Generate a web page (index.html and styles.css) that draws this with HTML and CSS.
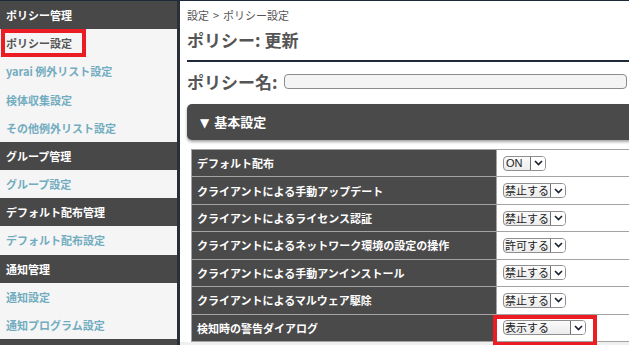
FILE: index.html
```html
<!DOCTYPE html>
<html lang="ja">
<head>
<meta charset="utf-8">
<title>ポリシー: 更新</title>
<link rel="stylesheet" href="styles.css">
</head>
<body>
<div class="app">
  <aside class="side">
    <div class="side-h">ポリシー管理</div>
    <a class="side-i current">ポリシー設定<span class="mark"></span></a>
    <a class="side-i">yarai 例外リスト設定</a>
    <a class="side-i">検体収集設定</a>
    <a class="side-i">その他例外リスト設定</a>
    <div class="side-h">グループ管理</div>
    <a class="side-i">グループ設定</a>
    <div class="side-h">デフォルト配布管理</div>
    <a class="side-i">デフォルト配布設定</a>
    <div class="side-h">通知管理</div>
    <a class="side-i">通知設定</a>
    <a class="side-i">通知プログラム設定</a>
    <div class="side-h"></div>
  </aside>
  <main class="main">
    <div class="content">
      <div class="crumb">設定<span class="gt">&gt;</span>ポリシー設定</div>
      <h1 class="title">ポリシー: 更新</h1>
      <div class="name-row">
        <span class="name-label">ポリシー名:</span>
        <span class="name-input"></span>
      </div>
      <section class="panel">
        <div class="panel-h"><span class="tri">▼</span>基本設定</div>
        <div class="grid">
          <div class="row">
            <div class="lab">デフォルト配布</div>
            <div class="val"><span class="sel sel-on"><span class="sel-v">ON</span><span class="sel-btn"><svg width="9" height="6" viewBox="0 0 9 6"><polyline points="1,1 4.5,4.5 8,1" fill="none" stroke="#1b2433" stroke-width="1.7"/></svg></span></span></div>
          </div>
          <div class="row">
            <div class="lab">クライアントによる手動アップデート</div>
            <div class="val"><span class="sel"><span class="sel-v">禁止する</span><span class="sel-btn"><svg width="9" height="6" viewBox="0 0 9 6"><polyline points="1,1 4.5,4.5 8,1" fill="none" stroke="#1b2433" stroke-width="1.7"/></svg></span></span></div>
          </div>
          <div class="row">
            <div class="lab">クライアントによるライセンス認証</div>
            <div class="val"><span class="sel"><span class="sel-v">禁止する</span><span class="sel-btn"><svg width="9" height="6" viewBox="0 0 9 6"><polyline points="1,1 4.5,4.5 8,1" fill="none" stroke="#1b2433" stroke-width="1.7"/></svg></span></span></div>
          </div>
          <div class="row">
            <div class="lab">クライアントによるネットワーク環境の設定の操作</div>
            <div class="val"><span class="sel"><span class="sel-v">許可する</span><span class="sel-btn"><svg width="9" height="6" viewBox="0 0 9 6"><polyline points="1,1 4.5,4.5 8,1" fill="none" stroke="#1b2433" stroke-width="1.7"/></svg></span></span></div>
          </div>
          <div class="row">
            <div class="lab">クライアントによる手動アンインストール</div>
            <div class="val"><span class="sel"><span class="sel-v">禁止する</span><span class="sel-btn"><svg width="9" height="6" viewBox="0 0 9 6"><polyline points="1,1 4.5,4.5 8,1" fill="none" stroke="#1b2433" stroke-width="1.7"/></svg></span></span></div>
          </div>
          <div class="row">
            <div class="lab">クライアントによるマルウェア駆除</div>
            <div class="val"><span class="sel"><span class="sel-v">禁止する</span><span class="sel-btn"><svg width="9" height="6" viewBox="0 0 9 6"><polyline points="1,1 4.5,4.5 8,1" fill="none" stroke="#1b2433" stroke-width="1.7"/></svg></span></span></div>
          </div>
          <div class="row">
            <div class="lab">検知時の警告ダイアログ</div>
            <div class="val"><span class="sel sel-wide"><span class="sel-v">表示する</span><span class="sel-btn"><svg width="9" height="6" viewBox="0 0 9 6"><polyline points="1,1 4.5,4.5 8,1" fill="none" stroke="#1b2433" stroke-width="1.7"/></svg></span></span><span class="hl"></span></div>
          </div>
        </div>
      </section>
    </div>
    <div class="foot"></div>
  </main>
</div>
</body>
</html>
```
FILE: styles.css
```css
html, body {
  margin: 0;
  padding: 0;
  background: #ffffff;
  overflow: hidden;
}
body {
  font-family: "Noto Sans CJK JP", "Noto Sans", sans-serif;
  color: #555555;
}
.app {
  display: flex;
  border-top: 1px solid #1d2a39;
  height: 344px;
}
.side {
  width: 177px;
  flex: none;
  background: #f5f5f5;
  border-right: 3px solid #2a2f38;
  display: flex;
  flex-direction: column;
}
.side-h {
  height: 28px;
  flex: none;
  background: #484848;
  color: #ffffff;
  font-size: 11px;
  font-weight: bold;
  line-height: 28px;
  padding-left: 6px;
}
.side-i {
  position: relative;
  height: 28.25px;
  flex: none;
  color: #72acc0;
  font-size: 11px;
  font-weight: bold;
  line-height: 28px;
  padding-left: 6px;
  text-decoration: none;
}
.side-i.current {
  color: #555555;
}
.mark {
  position: absolute;
  left: 1px;
  top: 0;
  width: 85px;
  height: 100%;
  border: 4px solid #ec1c24;
  box-sizing: border-box;
}
.side .side-h:last-child {
  flex: 1;
}
.main {
  flex: 1;
  min-width: 0;
  overflow: hidden;
  display: flex;
  flex-direction: column;
}
.content {
  padding-left: 7px;
}
.crumb {
  margin-top: 7px;
  font-size: 11px;
  line-height: 14px;
  color: #555555;
}
.gt {
  margin: 0 4px;
}
.title {
  margin: 7px 0 0;
  padding-bottom: 9px;
  border-bottom: 2px solid #1d2a39;
  font-size: 17px;
  line-height: 22px;
  font-weight: bold;
  color: #555555;
}
.name-row {
  margin-top: 8px;
  height: 23px;
  display: flex;
  align-items: center;
  gap: 6px;
}
.name-label {
  font-size: 17px;
  font-weight: bold;
  color: #555555;
}
.name-input {
  width: 343px;
  height: 15px;
  box-sizing: border-box;
  border: 1px solid #8c8c8c;
  border-radius: 4px;
  background: #f4f4f4;
}
.panel {
  margin-top: 11px;
  width: 470px;
}
.panel-h {
  height: 36px;
  background: #4a4a4a;
  border-radius: 5px 0 0 5px;
  box-shadow: 0 2px 3px rgba(0, 0, 0, 0.35);
  color: #ffffff;
  font-size: 13px;
  font-weight: bold;
  line-height: 36px;
  padding-left: 13px;
}
.tri {
  font-family: "DejaVu Sans", sans-serif;
  font-size: 12px;
  margin-right: 5px;
}
.grid {
  margin: 9px 0 0 4px;
  border-top: 1px solid #a3a3a3;
  width: 460px;
}
.row {
  display: grid;
  grid-template-columns: 306px 1fr;
  height: 27.43px;
  box-sizing: border-box;
  border-bottom: 1px solid #a3a3a3;
}
.lab {
  background: #4a4a4a;
  border-left: 1px solid #a3a3a3;
  border-right: 1px solid #a3a3a3;
  color: #ffffff;
  font-size: 11px;
  font-weight: bold;
  padding-left: 5px;
  display: flex;
  align-items: center;
}
.val {
  position: relative;
  background: #ffffff;
  padding-left: 6px;
  display: flex;
  align-items: center;
}
.sel {
  display: inline-flex;
  height: 15px;
  box-sizing: border-box;
  border: 1px solid #8f8f8f;
  border-radius: 4px;
  background: linear-gradient(#fbfbfb, #ececec);
  color: #222222;
  overflow: hidden;
}
.sel-v {
  width: 46px;
  box-sizing: border-box;
  padding-left: 1px;
  font-size: 11px;
  line-height: 13px;
  white-space: nowrap;
}
.sel-on .sel-v {
  width: 26px;
  font-family: "Liberation Sans", sans-serif;
  font-size: 11px;
  padding-left: 2px;
}
.sel-wide .sel-v {
  width: 66px;
}
.sel-btn {
  width: 14px;
  border-left: 1px solid #6f6f6f;
  background: #ffffff;
  display: flex;
  align-items: center;
  justify-content: center;
}
.hl {
  position: absolute;
  left: -4px;
  top: 0;
  width: 104px;
  height: 31px;
  border: 4px solid #ec1c24;
  box-sizing: border-box;
}
.foot {
  flex: 1;
  margin-top: 0;
  background: #efefef;
}
```
